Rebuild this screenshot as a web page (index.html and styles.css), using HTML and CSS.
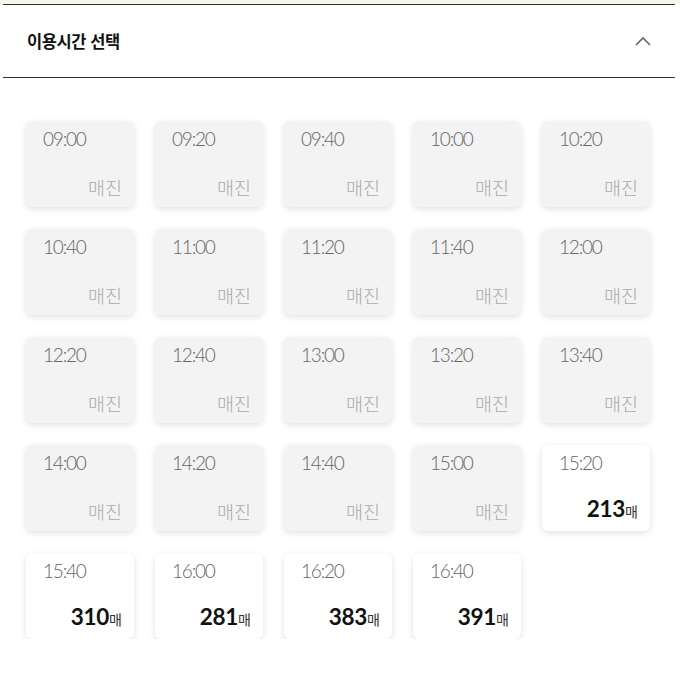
FILE: index.html
```html
<!DOCTYPE html>
<html lang="ko">
<head>
<meta charset="utf-8">
<link rel="stylesheet" href="styles.css">
</head>
<body>
<div class="topbar"></div>
<section class="panel">
  <header class="panel-head">
    <h2 class="panel-title">이용시간 선택</h2>
    <svg class="chev" width="18" height="12" viewBox="0 0 18 12"><path d="M2 10 L9 3 L16 10" fill="none" stroke="#666" stroke-width="1.6"/></svg>
  </header>
  <div class="grid">
    <div class="slot off"><span class="time">09:00</span><span class="state">매진</span></div>
    <div class="slot off"><span class="time">09:20</span><span class="state">매진</span></div>
    <div class="slot off"><span class="time">09:40</span><span class="state">매진</span></div>
    <div class="slot off"><span class="time">10:00</span><span class="state">매진</span></div>
    <div class="slot off"><span class="time">10:20</span><span class="state">매진</span></div>
    <div class="slot off"><span class="time">10:40</span><span class="state">매진</span></div>
    <div class="slot off"><span class="time">11:00</span><span class="state">매진</span></div>
    <div class="slot off"><span class="time">11:20</span><span class="state">매진</span></div>
    <div class="slot off"><span class="time">11:40</span><span class="state">매진</span></div>
    <div class="slot off"><span class="time">12:00</span><span class="state">매진</span></div>
    <div class="slot off"><span class="time">12:20</span><span class="state">매진</span></div>
    <div class="slot off"><span class="time">12:40</span><span class="state">매진</span></div>
    <div class="slot off"><span class="time">13:00</span><span class="state">매진</span></div>
    <div class="slot off"><span class="time">13:20</span><span class="state">매진</span></div>
    <div class="slot off"><span class="time">13:40</span><span class="state">매진</span></div>
    <div class="slot off"><span class="time">14:00</span><span class="state">매진</span></div>
    <div class="slot off"><span class="time">14:20</span><span class="state">매진</span></div>
    <div class="slot off"><span class="time">14:40</span><span class="state">매진</span></div>
    <div class="slot off"><span class="time">15:00</span><span class="state">매진</span></div>
    <div class="slot"><span class="time">15:20</span><span class="count"><b>213</b>매</span></div>
    <div class="slot"><span class="time">15:40</span><span class="count"><b>310</b>매</span></div>
    <div class="slot"><span class="time">16:00</span><span class="count"><b>281</b>매</span></div>
    <div class="slot"><span class="time">16:20</span><span class="count"><b>383</b>매</span></div>
    <div class="slot"><span class="time">16:40</span><span class="count"><b>391</b>매</span></div>
  </div>
</section>
</body>
</html>
```
FILE: styles.css
```css
html, body { margin: 0; padding: 0; background: #fff; }
body { font-family: "Noto Sans CJK KR", "Noto Sans", sans-serif; }
.topbar { height: 4px; background: #f7f4ee; }
.panel { margin: 0 5px 0 3px; }
.panel-head {
  display: flex; align-items: center; justify-content: space-between;
  height: 72px;
  border-top: 1px solid #333; border-bottom: 1px solid #333;
  padding: 0 23px 0 24px;
}
.panel-title { margin: 0; font-size: 16.5px; font-weight: 700; color: #111; letter-spacing: -0.4px; }
.chev { display: block; }
.grid {
  display: grid;
  grid-template-columns: repeat(5, 108px);
  column-gap: 21px; row-gap: 22px;
  padding: 43px 0 0 23px;
}
.slot {
  height: 86px; box-sizing: border-box;
  background: #fff; border-radius: 6px;
  box-shadow: 0 2px 6px rgba(0,0,0,0.12);
  display: flex; flex-direction: column; justify-content: space-between;
  padding: 6px 12px 8px 17px;
}
.slot.off { background: #f3f3f3; }
.time {
  font-family: Lato, "Noto Sans", sans-serif; font-weight: 300;
  font-size: 19px; letter-spacing: -1.2px; color: #666;
}
.state { align-self: flex-end; font-size: 18.5px; font-weight: 300; color: #aaa; line-height: 24px; }
.count { align-self: flex-end; font-size: 14px; color: #333; line-height: 24px; }
.count b { font-family: Lato, sans-serif; font-weight: 700; font-size: 22.5px; color: #111; letter-spacing: -0.3px; }
```
